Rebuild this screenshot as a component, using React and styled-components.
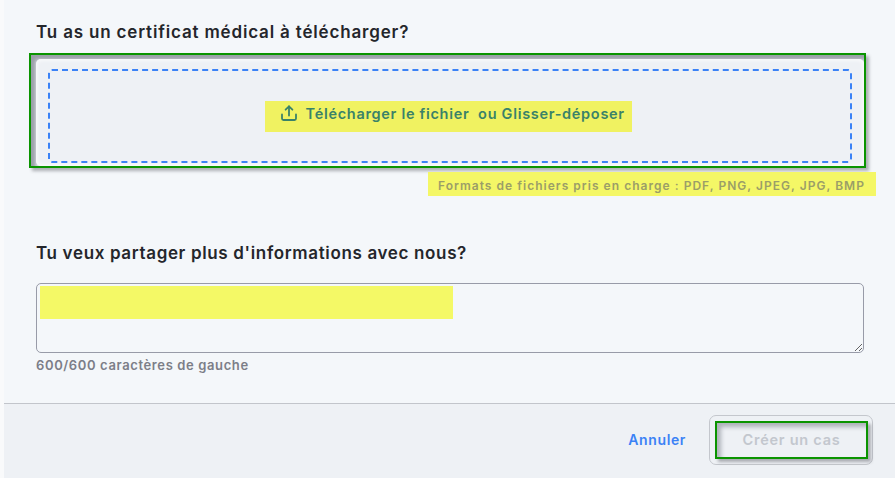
import React from "react";
import styled, { createGlobalStyle } from "styled-components";

const Global = createGlobalStyle`
  html, body { margin: 0; padding: 0; background: #f9fafb; }
  * { box-sizing: border-box; }
`;

const Page = styled.div`
  width: 895px;
  height: 478px;
  padding-left: 4px;
  display: flex;
  flex-direction: column;
  overflow: hidden;
  font-family: Inter, "Liberation Sans", sans-serif;
`;

const Body = styled.main`
  flex: 1;
  background: #f4f7fa;
  display: flex;
  flex-direction: column;
  padding: 22px 0 0 32px;
`;

const Question = styled.h2`
  margin: 0;
  height: 20px;
  font-size: 17px;
  line-height: 20px;
  font-weight: 600;
  letter-spacing: 0.83px;
  color: #24262b;
  white-space: nowrap;
`;

const Outline = styled.div`
  width: 837px;
  height: 115px;
  margin: 11px 0 0 -7px;
  border: 2px solid #0a9400;
  padding: 4px 0 0 5px;
  background: #eef1f5;
  box-shadow: 3px 3px 3px rgba(60, 60, 70, 0.38), inset 5px 5px 4px rgba(70, 75, 90, 0.5);
`;

const Dropzone = styled.div`
  width: 828px;
  height: 107px;
  border-radius: 5px;
  background: #eef1f5;
  padding: 10px 9px 0 12px;
  box-shadow: inset 0 0 4px 1px rgba(255, 255, 255, 0.85);
`;

const Dashed = styled.div`
  width: 804px;
  height: 94px;
  border: 2px dashed #3b82f6;
  border-radius: 4px;
  display: flex;
  align-items: center;
  justify-content: center;
`;

const UploadButton = styled.div`
  width: 367px;
  height: 31px;
  margin: 1px 4px 0 0;
  padding: 0 0 7px 16px;
  background: #f0f261;
  color: #3a8269;
  display: flex;
  align-items: center;
  gap: 9px;
  font-size: 14.5px;
  font-weight: 600;
  letter-spacing: 0.7px;
  white-space: pre;
`;

const UploadIcon = styled.svg`
  width: 16px;
  height: 16px;
  flex: none;
  fill: none;
  stroke: #3a8269;
  stroke-width: 1.8;
  stroke-linecap: round;
  stroke-linejoin: round;
`;

const FormatsRow = styled.div`
  width: 840px;
  margin-top: 4px;
  display: flex;
  justify-content: flex-end;
`;

const Formats = styled.div`
  width: 448px;
  height: 24px;
  padding-left: 10px;
  background: #f4f766;
  color: #9b9e68;
  font-size: 12px;
  font-weight: 600;
  line-height: 27px;
  letter-spacing: 1.03px;
  white-space: nowrap;
`;

const SecondQuestion = styled(Question)`
  margin-top: 47px;
  letter-spacing: 0.65px;
`;

const TextareaWrap = styled.div`
  position: relative;
  width: 828px;
  height: 70px;
  margin-top: 20px;
`;

const Area = styled.textarea`
  display: block;
  width: 100%;
  height: 100%;
  border: 1px solid #989ba8;
  border-radius: 5px;
  background: #f4f7fa;
  outline: none;
`;

const Redaction = styled.div`
  position: absolute;
  left: 4px;
  top: 3px;
  width: 413px;
  height: 33px;
  background: #f4f966;
`;

const Counter = styled.div`
  margin-top: 4px;
  font-size: 13px;
  line-height: 16px;
  font-weight: 600;
  letter-spacing: 0.62px;
  color: #7c7e88;
`;

const Footer = styled.footer`
  height: 75px;
  background: #eef1f5;
  border-top: 1px solid #c2c5cb;
  display: flex;
  align-items: flex-start;
  justify-content: flex-end;
  padding: 11px 22px 0 0;
  gap: 23px;
`;

const Cancel = styled.button`
  margin-top: 15px;
  padding: 0;
  border: 0;
  background: none;
  font: 600 14px/20px Inter, "Liberation Sans", sans-serif;
  letter-spacing: 0.62px;
  color: #3b82f6;
`;

const SubmitFrame = styled.div`
  width: 164px;
  height: 50px;
  border: 1px solid #c4c7cd;
  border-radius: 7px;
  padding: 5px 4px 0 5px;
`;

const Submit = styled.button`
  display: block;
  width: 153px;
  height: 38px;
  padding: 0;
  border: 2px solid #0a9400;
  background: #eef1f5;
  font: 600 14.5px/20px Inter, "Liberation Sans", sans-serif;
  letter-spacing: 0.75px;
  color: #c3c7ce;
  box-shadow: 3px 3px 3px rgba(60, 60, 70, 0.38), inset 4px 4px 4px rgba(70, 75, 90, 0.38);
`;

export default function App() {
  return (
    <Page>
      <Global />
      <Body>
        <Question>Tu as un certificat médical à télécharger?</Question>
        <Outline>
          <Dropzone>
            <Dashed>
              <UploadButton>
                <UploadIcon viewBox="0 0 16 16">
                  <path d="M8 10.5V1.5" />
                  <path d="M4.6 4.7 8 1.3l3.4 3.4" />
                  <path d="M1 9.5v4a1.5 1.5 0 0 0 1.5 1.5h11a1.5 1.5 0 0 0 1.5-1.5v-4" />
                </UploadIcon>
                <span>Télécharger le fichier  ou Glisser-déposer</span>
              </UploadButton>
            </Dashed>
          </Dropzone>
        </Outline>
        <FormatsRow>
          <Formats>Formats de fichiers pris en charge : PDF, PNG, JPEG, JPG, BMP</Formats>
        </FormatsRow>
        <SecondQuestion>Tu veux partager plus d'informations avec nous?</SecondQuestion>
        <TextareaWrap>
          <Area readOnly aria-label="Informations" />
          <Redaction />
        </TextareaWrap>
        <Counter>600/600 caractères de gauche</Counter>
      </Body>
      <Footer>
        <Cancel>Annuler</Cancel>
        <SubmitFrame>
          <Submit>Créer un cas</Submit>
        </SubmitFrame>
      </Footer>
    </Page>
  );
}
